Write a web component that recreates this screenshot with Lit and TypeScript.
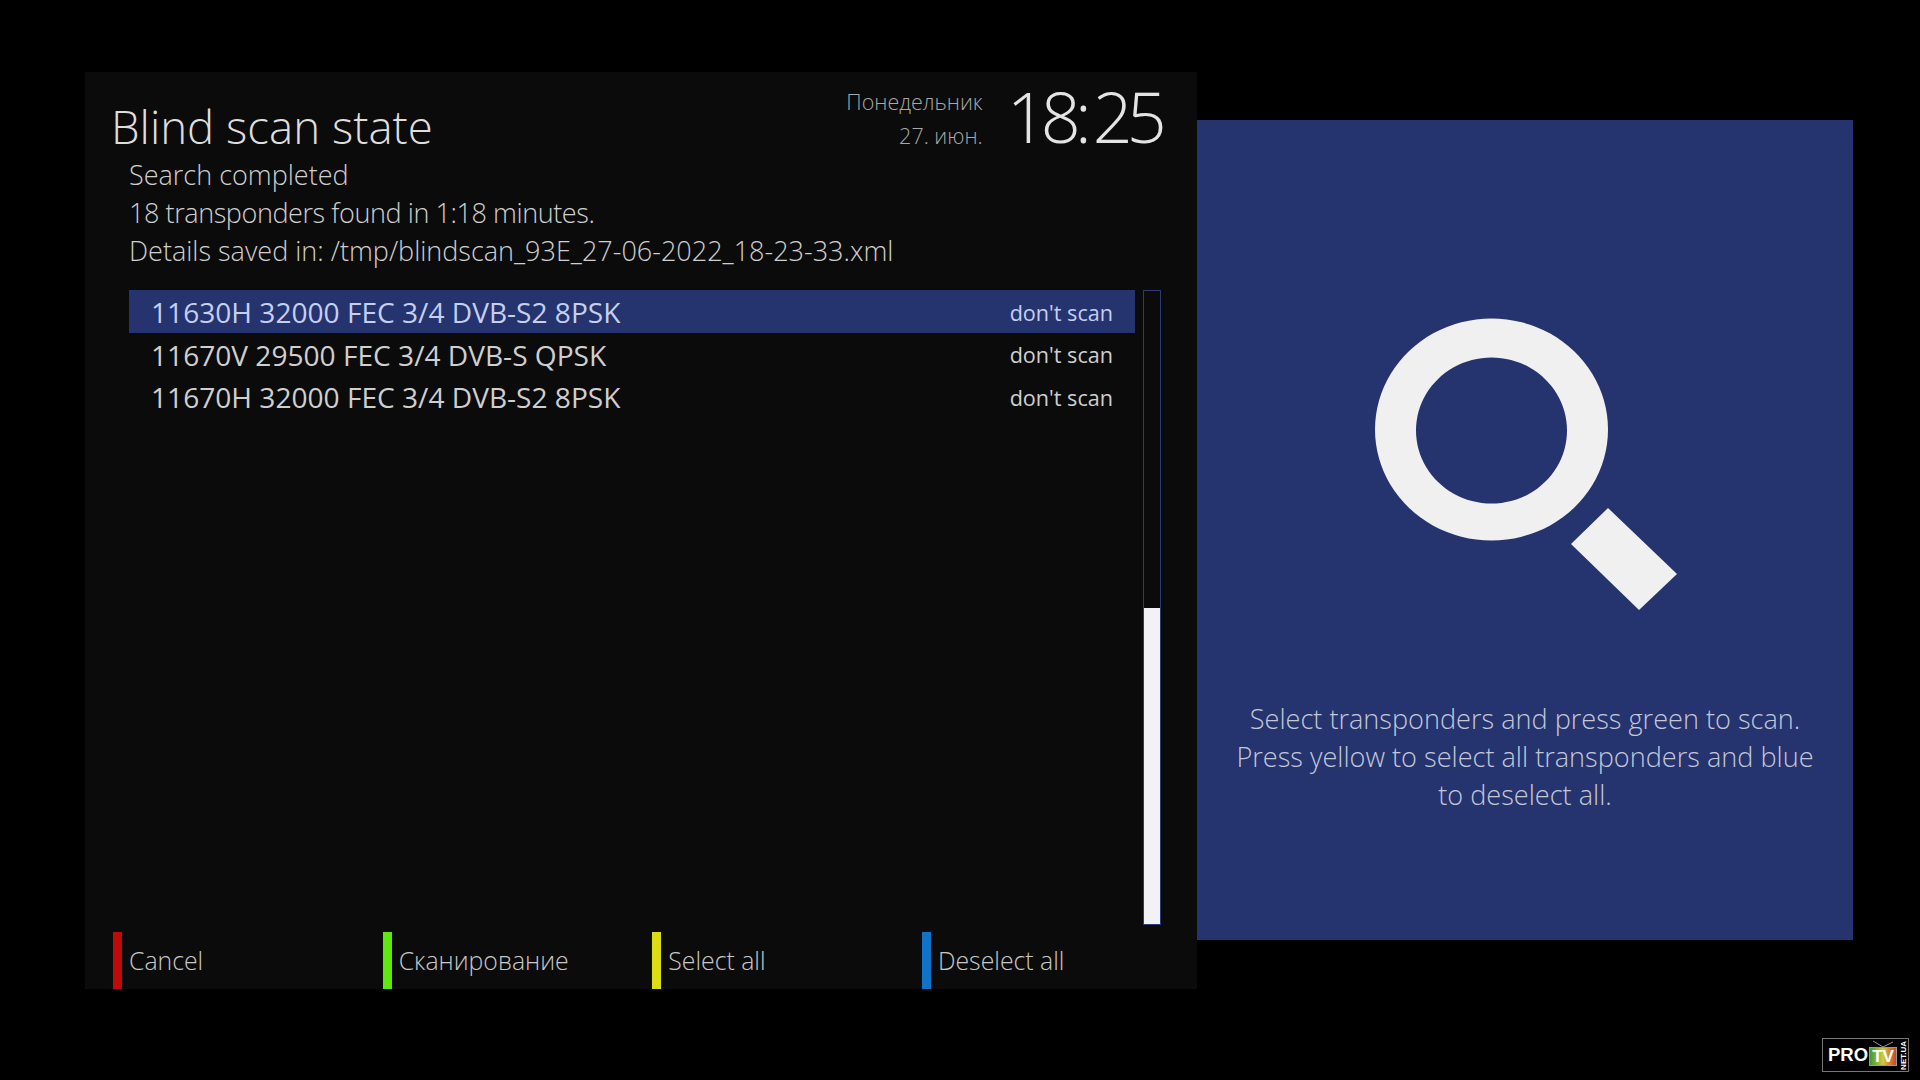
import { LitElement, html, css, svg } from "lit";
import { customElement } from "lit/decorators.js";

const rows = [
  "11630H 32000 FEC 3/4 DVB-S2 8PSK",
  "11670V 29500 FEC 3/4 DVB-S QPSK",
  "11670H 32000 FEC 3/4 DVB-S2 8PSK",
];
const keys = [
  ["Cancel", "red"],
  ["Сканирование", "green"],
  ["Select all", "yellow"],
  ["Deselect all", "blue"],
];

@customElement("app-root")
export class AppRoot extends LitElement {
  static styles = css`
    :host { display: block; width: 1920px; height: 1080px; background: #000; overflow: hidden; position: relative; font-family: "Open Sans", "Noto Sans", sans-serif; }
    .screen { display: flex; align-items: flex-start; padding: 72px 0 0 85px; box-sizing: border-box; height: 1080px; }
    .panel { width: 1112px; height: 917px; background: #0b0b0b; display: flex; flex-direction: column; box-sizing: border-box; flex: none; }
    .head { height: 80px; display: flex; justify-content: space-between; padding: 0 36px 0 26px; box-sizing: border-box; }
    .title { font-size: 45.6px; font-weight: 300; color: #dedede; line-height: 48px; margin-top: 30px; }
    .clock { display: flex; gap: 24px; }
    .date { font-size: 21.5px; font-weight: 300; color: #a8a8a8; text-align: right; line-height: 34px; margin-top: 13px; }
    .time { font-size: 70px; font-weight: 300; color: #e4e4e4; line-height: 70px; margin-top: 9px; letter-spacing: -5.8px; white-space: nowrap; }
    .colon { margin: 0 1px 0 0; letter-spacing: 0; }
    .status { margin: 4px 0 0 44px; font-size: 27px; font-weight: 300; color: #cfcfcf; line-height: 38px; height: 119px; white-space: nowrap; }
    .tight { letter-spacing: -0.42px; }
    .mid { display: flex; gap: 8px; margin: 15px 0 0 44px; height: 635px; }
    .list { width: 1006px; }
    .row { height: 42.6px; display: flex; justify-content: space-between; align-items: center; padding: 2px 22px 0 22px; box-sizing: border-box; font-size: 28.1px; color: #cfcfcf; font-weight: 400; }
    .row.sel { background: #25336f; color: #c5cff0; }
    .row .st { font-size: 21.6px; font-weight: 400; }
    .bar { width: 18px; height: 635px; box-sizing: border-box; border: 1px solid #2c3a78; padding: 317px 0 0 0; flex: none; }
    .thumb { background: #f2f2f6; height: 100%; }
    .foot { display: flex; margin: 7px 0 0 28px; height: 57px; }
    .key { width: 269.67px; display: flex; align-items: center; gap: 7px; font-size: 24.8px; font-weight: 300; color: #c8c8c8; flex: none; }
    .key span:last-child { margin-top: -2px; }
    .swatch { width: 9px; height: 57px; flex: none; }
    .red { background: #c00a0a; }
    .green { background: #5fe80e; }
    .yellow { background: #dcdc12; }
    .blue { background: #0f74c8; }
    .side { width: 656px; height: 820px; margin-top: 48px; background: #25336f; display: flex; flex-direction: column; align-items: center; flex: none; }
    .glass { display: block; flex: none; }
    .help { font-size: 27.1px; font-weight: 300; line-height: 38px; color: #c3c7d6; text-align: center; white-space: nowrap; }
    .logo { position: absolute; left: 1822px; top: 1038px; width: 87px; height: 34px; box-sizing: border-box; border: 1px solid #777; background: #000; display: flex; align-items: center; padding-left: 5px; font-family: "Liberation Sans", sans-serif; font-weight: 700; color: #fff; font-size: 18.5px; }
    .tv { position: relative; margin-left: 1px; width: 28px; height: 19px; margin-top: 2px; background: linear-gradient(90deg,#3f9a3c,#d6c83a 50%,#c8452f); color: #fff; font-size: 17px; text-align: center; line-height: 18px; border: 1px solid #999; box-sizing: border-box; flex: none; }
    .ant { position: absolute; left: 1px; top: -8px; display: block; }
    .net { font-size: 8px; writing-mode: vertical-rl; transform: rotate(180deg); margin-left: 2px; line-height: 9px; white-space: nowrap; }
  `;
  render() {
    return html`
      <div class="screen">
        <div class="panel">
          <div class="head">
            <div class="title">Blind scan state</div>
            <div class="clock">
              <div class="date">Понедельник<br />27. июн.</div>
              <div class="time">18<span class="colon">:</span>25</div>
            </div>
          </div>
          <div class="status">
            Search completed<br />
            <span class="tight">18 transponders found in 1:18 minutes.</span><br />
            Details saved in: /tmp/blindscan_93E_27-06-2022_18-23-33.xml
          </div>
          <div class="mid">
            <div class="list">
              ${rows.map((r, i) => html`<div class="row ${i === 0 ? "sel" : ""}"><span>${r}</span><span class="st">don't scan</span></div>`)}
            </div>
            <div class="bar"><div class="thumb"></div></div>
          </div>
          <div class="foot">
            ${keys.map(([t, c]) => html`<div class="key"><span class="swatch ${c}"></span><span>${t}</span></div>`)}
          </div>
        </div>
        <div class="side">
          <svg class="glass" width="656" height="580" viewBox="0 0 656 580">
            ${svg`<path fill="#f0f0f0" fill-rule="evenodd" d="M294.5 198.5a116.5 111 0 1 0 .01 0Z M294.5 237.5a75.5 73 0 1 1 -.01 0Z"/>
            <polygon fill="#f0f0f0" points="411,388 480,454 442,490 374,424"/>`}
          </svg>
          <div class="help">Select transponders and press green to scan.<br />Press yellow to select all transponders and blue<br />to deselect all.</div>
        </div>
      </div>
      <div class="logo">PRO<span class="tv"><svg class="ant" width="24" height="8" viewBox="0 0 24 8">${svg`<path d="M2 1 12 7 22 2" fill="none" stroke="#999" stroke-width="1"/>`}</svg>TV</span><span class="net">NET.UA</span></div>
    `;
  }
}
